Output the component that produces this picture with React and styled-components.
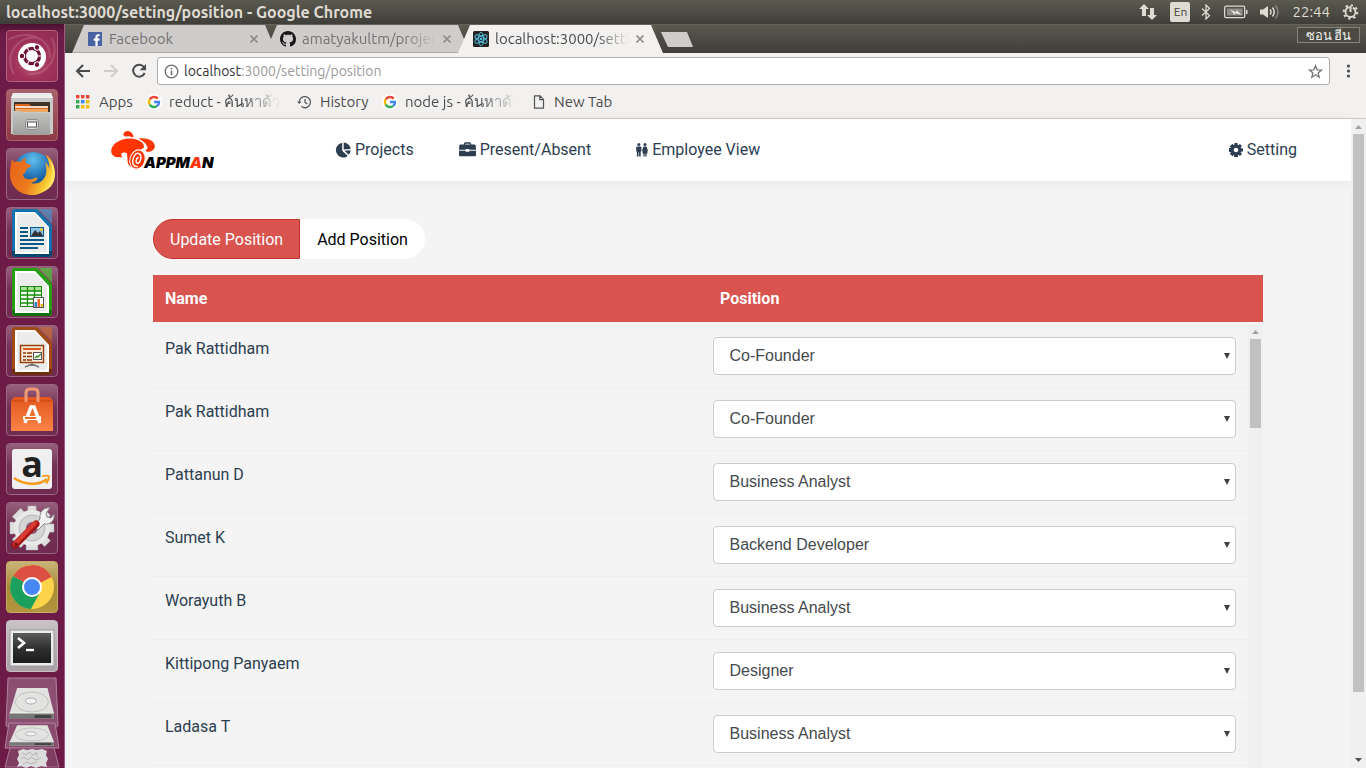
import React from "react";
import styled, { createGlobalStyle } from "styled-components";

const ui = `Ubuntu, "Open Sans", "Noto Sans", sans-serif`;

const GlobalStyle = createGlobalStyle`
  * { box-sizing: border-box; }
  body { margin: 0; font-family: ${ui}; }
  button, input, select { font: inherit; color: inherit; }
`;

/* ---------- desktop ---------- */

const Desktop = styled.div`
  display: flex;
  flex-direction: column;
  height: 100vh;
  overflow: hidden;
  background: #6b1b47;
`;

const MenuBar = styled.header`
  display: flex;
  align-items: center;
  justify-content: space-between;
  flex: none;
  height: 24px;
  padding: 0 7px 0 6px;
  background: linear-gradient(#5b5a50, #3f3e39);
  color: #dfdbd2;
`;

const WindowTitle = styled.h1`
  margin: 0;
  font-size: 16px;
  font-weight: 700;
  line-height: 24px;
  white-space: nowrap;
`;

const Indicators = styled.div`
  display: flex;
  align-items: center;
`;

const Indicator = styled.button`
  display: flex;
  padding: 0;
  margin-left: ${(p) => p.$gap || 12}px;
  border: 0;
  background: none;
  font-size: 15px;
  line-height: 20px;
`;

const Keyboard = styled(Indicator)`
  justify-content: center;
  width: 20px;
  border-radius: 2px;
  background: #dfdbd2;
  color: #45443e;
  font-size: 12px;
`;

const Body = styled.div`
  display: flex;
  flex: 1;
  min-height: 0;
`;

const Launcher = styled.nav`
  display: flex;
  flex-direction: column;
  align-items: center;
  gap: 7px;
  flex: none;
  width: 65px;
  padding-top: 6px;
  overflow: hidden;
  border-right: 1px solid #9c5c86;
  background: linear-gradient(#4b1130, #6d1c48 10px, #6b1b45);
`;

const Tile = styled.button`
  position: relative;
  flex: none;
  width: 52px;
  height: 52px;
  padding: 0;
  border: 1px solid ${(p) => p.$edge || "#9a6583"};
  border-radius: 4px;
  background: ${(p) => p.$bg || "linear-gradient(#96607c, #743153 45%, #6f2b50)"};

  svg { display: block; margin: -1px; }
`;

const Pip = styled.span`
  position: absolute;
  top: 20px;
  ${(p) => (p.$side === "left" ? "left: -7px" : "right: -6px")};
  border: 5px solid transparent;
  border-left-color: ${(p) => (p.$side === "left" ? "#dcd5d8" : "transparent")};
  border-right-color: ${(p) => (p.$side === "right" ? "#dcd5d8" : "transparent")};
  border-${(p) => p.$side}-width: 0;
`;

const Drives = styled.div`
  flex: none;
  margin-top: -2px;
  svg { display: block; }
`;

/* ---------- browser ---------- */

const Browser = styled.main`
  display: flex;
  flex-direction: column;
  flex: 1;
  min-width: 0;
  background: #f2f1f0;
`;

const TabStrip = styled.div`
  display: flex;
  flex: none;
  height: 29px;
  padding: 0 6px 0 7px;
  border-top: 1px solid #66645a;
  background: linear-gradient(#5a584f, #3f3e39);
`;

const TabShape = styled.div`
  position: relative;
  z-index: ${(p) => (p.$active ? 2 : 1)};
  display: flex;
  align-items: center;
  gap: 6px;
  width: 205px;
  margin-right: -12px;
  padding: 0 18px 0 15px;
  clip-path: polygon(12px 0, calc(100% - 12px) 0, 100% 100%, 0 100%);
  background: ${(p) => (p.$active ? "#f2f1f0" : "linear-gradient(#cfcdcc, #cfcdcc 27px, #aeacaa 27px)")};
  color: ${(p) => (p.$active ? "#4c4c4c" : "#737271")};
`;

const TabLabel = styled.span`
  flex: 1;
  overflow: hidden;
  font-size: 15px;
  line-height: 24px;
  white-space: nowrap;
  ${(p) => p.$fade && "mask-image: linear-gradient(90deg, #000 calc(100% - 32px), transparent);"}
`;

const IconButton = styled.button`
  display: flex;
  padding: 0;
  border: 0;
  background: none;
`;

const NewTab = styled.button`
  width: 32px;
  height: 15px;
  margin: 7px 0 0 10px;
  padding: 0;
  border: 0;
  clip-path: polygon(0 0, 26px 0, 100% 100%, 7px 100%);
  background: #cfcdcc;
`;

const UserBadge = styled.button`
  width: 63px;
  height: 16px;
  margin: 2px 0 0 auto;
  padding: 0;
  border: 1px solid #85837a;
  background: #4a4942;
  color: #eeeeec;
  font-size: 13px;
  line-height: 14px;
`;

const Toolbar = styled.div`
  display: flex;
  align-items: center;
  gap: 12px;
  flex: none;
  height: 36px;
  padding: 0 10px;
`;

const Address = styled.div`
  display: flex;
  align-items: center;
  flex: 1;
  height: 28px;
  margin-left: -2px;
  padding: 0 6px;
  gap: 5px;
  border: 1px solid #b0aeac;
  border-radius: 3px;
  background: #fff;
`;

const AddressField = styled.div`
  flex: 1;
  font-size: 14px;
  line-height: 20px;
  color: #9b9b9b;
  outline: none;
  b { font-weight: 400; color: #333; }
`;

const Bookmarks = styled.div`
  display: flex;
  align-items: center;
  flex: none;
  height: 30px;
  padding: 0 11px 4px;
  border-bottom: 1px solid #cccbca;
`;

const Bookmark = styled.a`
  display: flex;
  align-items: center;
  gap: ${(p) => (p.$fade ? 7 : 9)}px;
  width: ${(p) => p.$width}px;
  color: #4c4c4c;
  font-size: 15px;
  line-height: 24px;
  text-decoration: none;
  white-space: nowrap;
  svg { flex: none; }
`;

const BookmarkLabel = styled.span`
  overflow: hidden;
  ${(p) => p.$fade && "width: 112px; mask-image: linear-gradient(90deg, #000 calc(100% - 40px), transparent);"}
`;

/* ---------- page ---------- */

const Viewport = styled.div`
  display: flex;
  flex: 1;
  min-height: 0;
  color: #2c3e50;
  font-family: Roboto, sans-serif;
  font-size: 16px;
  line-height: 24px;
`;

const Page = styled.div`
  display: flex;
  flex-direction: column;
  flex: 1;
  min-width: 0;
  background: #f4f4f4;
`;

const SiteHeader = styled.header`
  display: flex;
  align-items: center;
  flex: none;
  height: 62px;
  padding: 0 54px 0 44px;
  background: #fff;
  box-shadow: 0 2px 12px rgba(0, 0, 0, 0.06);
`;

const LogoLink = styled.a`
  display: flex;
  margin-right: 121px;
`;

const SiteNav = styled.nav`
  display: flex;
  flex: 1;
  gap: 45px;
`;

const NavLink = styled.a`
  display: flex;
  align-items: center;
  gap: 4px;
  color: #2c3e50;
  text-decoration: none;
  &:last-child { margin-left: auto; }
`;

const Content = styled.section`
  display: flex;
  flex-direction: column;
  flex: 1;
  min-height: 0;
  padding: 38px 88px 0;
`;

const Pills = styled.div`
  display: flex;
  flex: none;
  margin-bottom: 16px;
`;

const Pill = styled.button`
  height: 40px;
  padding: 1px 16px 0;
  border: 1px solid ${(p) => (p.$active ? "#c9302c" : "#fff")};
  border-radius: ${(p) => (p.$active ? "20px 0 0 20px" : "0 20px 20px 0")};
  background: ${(p) => (p.$active ? "#d9534f" : "#fff")};
  color: ${(p) => (p.$active ? "#fff" : "#000")};
`;

const Table = styled.table`
  width: 100%;
  table-layout: fixed;
  border-collapse: collapse;
`;

const HeadCell = styled.th`
  height: 47px;
  padding: 0 12px;
  background: #d9534f;
  color: #fff;
  font-weight: 700;
  text-align: left;
`;

const Scroller = styled.div`
  display: flex;
  flex: 1;
  min-height: 0;
  overflow: hidden;
  margin-top: 2px;
`;

const Rows = styled.div`
  flex: 1;
  overflow: hidden;
`;

const Cell = styled.td`
  height: 63px;
  padding: 12px;
  border-top: 1px solid #eceeef;
  vertical-align: top;
`;

const SelectBox = styled.div`
  position: relative;
  svg {
    position: absolute;
    right: 6px;
    top: 16px;
    pointer-events: none;
  }
`;

const Select = styled.select`
  display: block;
  width: 100%;
  height: 38px;
  padding: 0 24px 0 16px;
  appearance: none;
  border: 1px solid #ccc;
  border-radius: 4px;
  background: #fff;
  color: #464a4c;
  font-family: "Liberation Sans", Arial, sans-serif;
`;

const ScrollTrack = styled.div`
  display: flex;
  flex-direction: column;
  align-items: center;
  flex: none;
  width: 15px;
  background: #f0f0f0;
  svg { flex: none; }
  svg:last-child { margin-top: auto; }
`;

const ScrollThumb = styled.div`
  flex: none;
  width: 11px;
  height: ${(p) => p.$size};
  background: #c1c1c1;
`;

/* ---------- drawings ---------- */

const Arrow = ({ up, color }) => (
  <svg width="15" height="15" viewBox="0 0 15 15">
    <path d={up ? "M4 10l3.5-4 3.5 4z" : "M4 5l3.5 4 3.5-4z"} fill={color} />
  </svg>
);

const Google = () => (
  <svg width="16" height="16" viewBox="0 0 16 16">
    <circle cx="8" cy="8" r="8" fill="#fff" />
    <g fill="none" strokeWidth="2.4">
      <path d="M11.7 4.6A5 5 0 0 0 3.7 5.4" stroke="#ea4335" />
      <path d="M3.7 5.4A5 5 0 0 0 3.7 10.6" stroke="#fbbc05" />
      <path d="M3.7 10.6A5 5 0 0 0 11.2 11.9" stroke="#34a853" />
      <path d="M11.2 11.9A5 5 0 0 0 13 8H8" stroke="#4285f4" />
    </g>
  </svg>
);

const AppsGrid = () => (
  <svg width="14" height="14" viewBox="0 0 14 14">
    {["#ea4335", "#ea4335", "#ea4335", "#34a853", "#4285f4", "#fbbc05", "#34a853", "#fbbc05", "#fbbc05"].map((c, i) => (
      <rect key={i} x={(i % 3) * 5} y={Math.floor(i / 3) * 5} width="3.4" height="3.4" fill={c} />
    ))}
  </svg>
);

const HistoryIcon = () => (
  <svg width="14" height="14" viewBox="0 0 14 14" fill="none" stroke="#5a5a5a" strokeWidth="1.3">
    <path d="M2.2 7.2A5.6 5.6 0 1 1 4.4 11.6M8 4v3.4l2.4 1.6" />
    <path d="M0 6.4h4.6L2.3 9z" fill="#5a5a5a" stroke="none" />
  </svg>
);

const PageIcon = () => (
  <svg width="12" height="14" viewBox="0 0 12 14" fill="none" stroke="#555" strokeWidth="1.2">
    <path d="M1.5.8h5.6l3.4 3.6v8.8h-9zM6.8.8v3.9h3.7" />
  </svg>
);

const CloseIcon = () => (
  <svg width="10" height="10" viewBox="0 0 10 10">
    <path d="M1.5 1.5l7 7M8.5 1.5l-7 7" stroke="#8a8988" strokeWidth="1.6" />
  </svg>
);

const FacebookIcon = () => (
  <svg width="16" height="16" viewBox="0 0 16 16">
    <rect x="1" y="1" width="14" height="14" fill="#4862a3" />
    <path d="M8.4 15V9.7H6.7V7.6h1.7V6c0-1.8 1-2.8 2.7-2.8h1.6v2h-1c-.9 0-1.1.4-1.1 1.1v1.3h2.1l-.3 2.1h-1.8V15z" fill="#fff" />
  </svg>
);

const GithubIcon = () => (
  <svg width="16" height="16" viewBox="0 0 16 16">
    <path
      fill="#191717"
      d="M8 0C3.58 0 0 3.58 0 8c0 3.54 2.29 6.53 5.47 7.59.4.07.55-.17.55-.38 0-.19-.01-.82-.01-1.49-2.01.37-2.53-.49-2.69-.94-.09-.23-.48-.94-.82-1.13-.28-.15-.68-.52-.01-.53.63-.01 1.08.58 1.23.82.72 1.21 1.87.87 2.33.66.07-.52.28-.87.51-1.07-1.78-.2-3.64-.89-3.64-3.95 0-.87.31-1.59.82-2.15-.08-.2-.36-1.02.08-2.12 0 0 .67-.21 2.2.82.64-.18 1.32-.27 2-.27s1.36.09 2 .27c1.53-1.04 2.2-.82 2.2-.82.44 1.1.16 1.92.08 2.12.51.56.82 1.27.82 2.15 0 3.07-1.87 3.75-3.65 3.95.29.25.54.73.54 1.48 0 1.07-.01 1.93-.01 2.2 0 .21.15.46.55.38A8.01 8.01 0 0 0 16 8c0-4.42-3.58-8-8-8z"
    />
  </svg>
);

const ReactIcon = () => (
  <svg width="16" height="16" viewBox="0 0 16 16">
    <rect width="16" height="16" rx="1.5" fill="#222" />
    <g fill="none" stroke="#53c1de" strokeWidth=".9">
      {[30, 90, 150].map((a) => (
        <ellipse key={a} cx="8" cy="8" rx="6.8" ry="2.6" transform={`rotate(${a} 8 8)`} />
      ))}
    </g>
    <circle cx="8" cy="8" r="1.3" fill="#53c1de" />
  </svg>
);

const Logo = () => (
  <svg width="105" height="42" viewBox="0 0 105 42" role="img" aria-label="Appman">
    <path fill="#fe3502" d="M14.300 6C14.500 3.200 17 1.600 20 2.200c2.600.500 4 2.800 4.600 5.400l-1 .8c-2.600-1.200-5-1.300-7.300-.6z" />
    <path
      fill="#fe3502"
      d="M2.200 22C2.200 15 11 9.400 20.500 9.400c5 0 9.500 1.200 12.500 4 1.300 1.200 2 3 2.100 5.200L31 21l-4 18.500c-5-.5-8-3-8.400-7L18 24.200c-2.500-1.300-5.200-.6-6 1l1.400 3c-3 .4-6.700 0-8.700-1.300-1.800-1-2.500-2.800-2.500-4.900z"
    />
    <path fill="#fe3502" d="M29.500 9.600c8.500-1.200 16.300 2.200 16.300 7.600 0 3.400-3.600 6-7.600 5.600l-1.800-.8 2.200-3c-.5-3.800-4.500-7-9.100-9.400z" />
    <ellipse cx="28.500" cy="30.500" rx="7.500" ry="9.800" fill="#fe3502" stroke="#fff" transform="rotate(18 28.500 30.500)" />
    <g fill="none" stroke="#fff" strokeWidth="1.500">
      <path d="M29 37.500c-3.800.6-5.600-1.900-5.200-5.900.5-4.600 2.900-7.600 5.600-7.200 2.500.4 3 3.200 2.200 6.200-.6 2.200-1.700 3.700-3 3.700-1.300 0-1.700-1.500-1.300-3.200.4-1.600 1.200-2.700 2.400-2.700" />
    </g>
    <text x="35" y="39" fontFamily="Inter, sans-serif" fontSize="15" fontWeight="900" fontStyle="italic" fill="#000">
      APPM<tspan fill="#fe3502">A</tspan>N
    </text>
  </svg>
);

const PieIcon = () => (
  <svg width="16" height="16" viewBox="0 0 16 16" fill="#2c3e50">
    <path d="M7.200.8v7.900l5.600 5.300A7.400 7.400 0 1 1 7.200.8z" />
    <path d="M8.700.5a7.300 7.300 0 0 1 6.900 6.500L8.700 7.500z" />
    <path d="M9.600 8.700l6-.4a7.300 7.300 0 0 1-1.900 4.500z" />
  </svg>
);

const BriefcaseIcon = () => (
  <svg width="17" height="16" viewBox="0 0 17 16">
    <path d="M5.500 3.600V1.900q0-.9.900-.9h4.200q.9 0 .9.900v1.700" fill="none" stroke="#2c3e50" strokeWidth="1.300" />
    <path d="M1.500 2.500h14q1 0 1.200 1l.3 4.200h-6.700V7H6.700v.7H0L.3 3.500q.2-1 1.200-1z" fill="#2c3e50" />
    <path d="M0 8.700h6.700v1.100h3.600V8.700H17v4.600q0 1-1 1H1q-1 0-1-1z" fill="#2c3e50" />
  </svg>
);

const PeopleIcon = () => (
  <svg width="12" height="16" viewBox="0 0 12 16" fill="#2c3e50">
    <circle cx="2.800" cy="2.500" r="1.500" />
    <path d="M1.200 4.500h3.200q1 0 1 1V9.400H4.700V14.600H3.100V10.500H2.500v4.100H.9V9.400H.2V5.500q0-1 1-1z" />
    <circle cx="9" cy="2.500" r="1.500" />
    <path d="M8 4.500h2q.7 0 .9.700L12 9.300l-.8.300.4 2h-1v3H9.300v-3h-.6v3H7.400v-3h-1l.4-2-.8-.3 1.100-4.100q.2-.7.900-.7z" />
  </svg>
);

const GearIcon = () => (
  <svg width="14" height="16" viewBox="0 0 14 16">
    <g fill="#2c3e50">
      {[0, 45, 90, 135].map((a) => (
        <path key={a} d="M5.500 1h3l.5 14H5z" transform={`rotate(${a} 7 8)`} />
      ))}
      <circle cx="7" cy="8" r="5.400" />
    </g>
    <circle cx="7" cy="8" r="2.300" fill="#fff" />
  </svg>
);

/* launcher drawings, each on a 52px tile */

const Art = ({ children }) => (
  <svg width="52" height="52" viewBox="0 0 52 52">{children}</svg>
);

const UbuntuArt = () => (
  <Art>
    <g fill="none" stroke="#fff" strokeWidth="2" opacity=".14">
      <path d="M2 10C20 0 44 6 44 28M46 8C54 26 42 46 22 44M8 44C-2 26 10 6 30 8" />
    </g>
    <circle cx="26" cy="27" r="14" fill="#fff" />
    <circle cx="26" cy="26" r="7.600" fill="none" stroke="#6d1339" strokeWidth="3.200" />
    {[60, 180, 300].map((a) => (
      <g key={a} transform={`rotate(${a} 26 26)`}>
        <path d="M26 26h12" stroke="#fff" strokeWidth="1" transform="rotate(60 26 26)" />
        <circle cx="36" cy="26" r="3.200" fill="#fff" />
        <circle cx="36" cy="26" r="2.200" fill="#6d1339" />
      </g>
    ))}
  </Art>
);

const FilesArt = () => (
  <Art>
    <path d="M7 4h38l2 5v36H5V9z" fill="#c9c9c8" />
    <path d="M7 4h38l2 5H5z" fill="#eee" />
    <rect x="8" y="13" width="36" height="10" fill="#3f3328" />
    <path d="M9 15h14l2 2h17v6H9z" fill="#d96a1e" />
    <path d="M9 18h33" stroke="#fff" strokeWidth="1.500" />
    <path d="M9 20h33v3H9z" fill="#f0a565" />
    <path d="M7 22h8l2 2h27v22H7z" fill="url(#cabinet)" />
    <rect x="19.500" y="30.500" width="13" height="10" rx="2.500" fill="#d7d7d6" stroke="#8d8d8d" />
    <rect x="21.500" y="33" width="9" height="5" fill="#fff" stroke="#555" />
    <defs>
      <linearGradient id="cabinet" x2="0" y2="1">
        <stop stopColor="#c3c3c2" />
        <stop offset="1" stopColor="#9e9e9d" />
      </linearGradient>
    </defs>
  </Art>
);

const FirefoxArt = () => (
  <Art>
    <defs>
      <radialGradient id="globe" cx=".5" cy=".2" r=".8">
        <stop stopColor="#60c0ee" />
        <stop offset=".6" stopColor="#1a66ab" />
        <stop offset="1" stopColor="#12315f" />
      </radialGradient>
      <linearGradient id="fox" x1="0" x2="1" y2=".4">
        <stop stopColor="#e8611b" />
        <stop offset=".6" stopColor="#ec7a1c" />
        <stop offset="1" stopColor="#fbd63a" />
      </linearGradient>
    </defs>
    <circle cx="27" cy="24" r="20" fill="url(#globe)" />
    <path
      fill="url(#fox)"
      d="M6 11c1 2 2 3 3 3 2-1 4-1 6 0 1-2 3-4 5-4-1 2-1 4 0 5 2 2 5 1 5 3 0 1-4 2-5 4 0 3-2 3-3 5 1 4 5 5 9 4 3-1 4-2 5-1 1 2-3 4-6 5 7 2 13-2 15-9 1-5 0-9-1-12 3 2 4 5 4 7 1-5-1-11-4-15 7 4 10 12 9 20-1 13-11 21-22 21C13 47 4 38 4 26c0-6 1-11 2-15z"
    />
    <path d="M43 12c3 5 4 10 3 15 0 8-5 14-12 17 9-1 15-8 15-18 0-6-2-11-6-14z" fill="#fde366" />
  </Art>
);

const OfficeArt = ({ color, dark, light, children }) => (
  <Art>
    <path d="M9 2h22l15 16v28q0 4-4 4H10q-4 0-4-4V5q0-3 3-3z" fill={color} />
    <path d="M6 44h40v2q0 4-4 4H10q-4 0-4-4z" fill={dark} />
    <path d="M33 2h11q2 0 2 2v13z" fill={light} opacity=".6" />
    <path d="M9 5h20l14 15v27H9z" fill="#fff" />
    <path d="M11 7h18l12 13v25H11z" fill="#ececec" />
    {children}
  </Art>
);

const WriterArt = () => (
  <OfficeArt color="#1371ab" dark="#06476f" light="#3d9ad6">
    <path d="M14 21h8M14 25h8M14 29h8M14 33h24M14 37h24M14 41h18" stroke="#0b5787" strokeWidth="2" />
    <rect x="24.500" y="20.500" width="13" height="9" fill="#8cc4e8" stroke="#0b5787" />
    <path d="M25 29l4-6 3 3 2-2 3 5z" fill="#333" />
    <circle cx="35.500" cy="22.500" r="1.500" fill="#f6c52c" />
  </OfficeArt>
);

const CalcArt = () => (
  <OfficeArt color="#24a012" dark="#11720a" light="#43d42c">
    <rect x="14.500" y="20.500" width="21" height="20" fill="#f3fff0" stroke="#1b8a0c" />
    <rect x="15" y="21" width="20" height="4" fill="#a5e398" />
    <path d="M14 25h22M14 29h22M14 33h22M14 37h22M21.500 20v21M28.500 20v21" stroke="#1b8a0c" strokeWidth="1.300" />
    <rect x="27.500" y="31.500" width="10" height="10" fill="#fff" stroke="#555" />
    <path d="M28.500 36h2.500v5h-2.500z" fill="#2a81c4" />
    <path d="M31.500 33h2.500v8h-2.500z" fill="#e66a1f" />
    <path d="M34.500 38H37v3h-2.500z" fill="#f3b72a" />
  </OfficeArt>
);

const ImpressArt = () => (
  <OfficeArt color="#a14a14" dark="#6d2f07" light="#d2702a">
    <rect x="14.500" y="20.500" width="23" height="17" fill="#fdeadd" stroke="#97410f" strokeWidth="1.500" />
    <path d="M17 24h18" stroke="#d65c1a" strokeWidth="2" />
    <path d="M17 28h3M17 31.500h3M17 35h3M21 28h5M21 31.500h5M21 35h5" stroke="#843a0c" strokeWidth="1.600" />
    <rect x="27.500" y="27.500" width="8" height="7" fill="#fff" stroke="#555" />
    <path d="M29 33l2-2 1 1 3-3" fill="none" stroke="#3a8f22" strokeWidth="1.400" />
    <path d="M26 38v3M19 42l7-3 7 3" fill="none" stroke="#777" strokeWidth="1.600" />
  </OfficeArt>
);

const SoftwareArt = () => (
  <Art>
    <defs>
      <linearGradient id="bag" x2="0" y2="1">
        <stop stopColor="#e2571d" />
        <stop offset="1" stopColor="#fa8445" />
      </linearGradient>
    </defs>
    <path d="M8 13h36l3 4v30H5V17z" fill="url(#bag)" />
    <path d="M5 17h42" stroke="#c24510" />
    <path d="M20 18V9q0-4 4-4h4q4 0 4 4v9" fill="none" stroke="#ef9a72" strokeWidth="3" />
    <path d="M19 39l6-16h3l6 16" fill="none" stroke="#fff" strokeWidth="3.500" />
    <rect x="17" y="32" width="18" height="4" rx="1" fill="#fff" />
    <rect x="19" y="33" width="11" height="2" fill="#ee6a28" />
  </Art>
);

const AmazonArt = () => (
  <Art>
    <rect x="6" y="6" width="40" height="40" rx="3" fill="#f0f0f0" />
    <text x="26" y="34" textAnchor="middle" fontFamily="Open Sans, sans-serif" fontSize="36" fontWeight="700" fill="#222">a</text>
    <path d="M8 35c10 7 25 8 33 1" fill="none" stroke="#f79a1b" strokeWidth="2.400" />
    <path d="M36 33.500c3-1 6-1 7 0 0 2-1 5-3 7" fill="none" stroke="#f79a1b" strokeWidth="1.800" />
  </Art>
);

const SettingsArt = () => (
  <Art>
    <g fill="#dedede" stroke="#b5b5b5" strokeWidth=".5">
      {[0, 45, 90, 135].map((a) => (
        <path key={a} d="M22 4h8l2 44H20z" transform={`rotate(${a} 26 26)`} />
      ))}
    </g>
    <circle cx="26" cy="26" r="18" fill="#e8e8e8" />
    <circle cx="26" cy="26" r="13" fill="#d4d4d4" stroke="#b5b5b5" />
    <circle cx="26" cy="26" r="6" fill="#8d5570" />
    <path d="M28 23l6-6c-1-7 4-12 10-11l-4 5 1 4 4 1 3-4c1 6-3 11-10 10l-6 6z" fill="#f1f1f1" stroke="#888" />
    <path d="M9 43L30 22" stroke="#a31414" strokeWidth="7" strokeLinecap="round" />
    <path d="M9 42L29 21" stroke="#d93a34" strokeWidth="4" strokeLinecap="round" />
    <circle cx="10" cy="42" r="1.600" fill="#6b0f0f" />
  </Art>
);

const ChromeArt = () => (
  <Art>
    <circle cx="26" cy="26" r="22" fill="#fdd34a" />
    <path d="M26 26L7 15a22 22 0 0 1 38.500 1z" fill="#dd4f43" />
    <path d="M26 4a22 22 0 0 1 19.500 12H26z" fill="#dd4f43" />
    <path d="M7 15a22 22 0 0 0 18 33l9-17-8-5z" fill="#1a9f5c" />
    <circle cx="26" cy="26" r="10" fill="#fff" />
    <circle cx="26" cy="26" r="8" fill="#4788f4" />
  </Art>
);

const TerminalArt = () => (
  <Art>
    <defs>
      <linearGradient id="screen" x2="0" y2="1">
        <stop stopColor="#5c5c5c" />
        <stop offset=".5" stopColor="#303030" />
        <stop offset="1" stopColor="#1c1c1c" />
      </linearGradient>
    </defs>
    <rect x="4" y="10" width="44" height="36" rx="1" fill="#ececec" stroke="#999" />
    <rect x="7" y="13" width="38" height="30" fill="url(#screen)" />
    <path d="M12 18l6 5-6 5" fill="none" stroke="#fff" strokeWidth="2.600" />
    <path d="M20 30h8" stroke="#fff" strokeWidth="2.400" />
  </Art>
);

const Disk = () => (
  <g>
    <path d="M11 11h33l7 25v6H3v-6z" fill="#e2e2e1" />
    <path d="M3 36h48v6H3z" fill="#777" />
    <path d="M3 36h48" stroke="#f5f5f5" />
    <path d="M30 38h18v3H30z" fill="#444" />
    <ellipse cx="27" cy="25" rx="18" ry="10" fill="none" stroke="#bdbdbd" />
    <ellipse cx="26" cy="24" rx="6" ry="3" fill="#f5f5f5" stroke="#aaa" />
  </g>
);

const DrivesArt = () => (
  <svg width="56" height="94" viewBox="0 0 56 94">
    <path d="M4 1h48l2 47q0 2-2 2H4q-2 0-2-2z" fill="#8d4f71" stroke="#b083a0" />
    <g transform="translate(3 0) scale(.92 1)"><Disk /></g>
    <path d="M5 46h46l4 25H1z" fill="#8a4b6e" stroke="#b083a0" />
    <g transform="translate(3 41) scale(.92 .66)"><Disk /></g>
    <path d="M6 71h44l5 19H1z" fill="#7f3d62" stroke="#a87795" />
    <path
      d="M14 74l5-2 4 1 5-1 5 1 5-1 5 2-1 4 2 4-2 4 1 4-6-1-5 2-5-2-5 2-5-2-4 1 2-4-2-4 2-4z"
      fill="#dcdcdc"
    />
    <path d="M18 76l4 2 3-3 4 3 5-2M17 82l3-2 4 3 3-3 5 3 5-2M19 87l4-2 4 2 6-2M31 75l3 5" fill="none" stroke="#b4b4b4" />
  </svg>
);

/* ---------- data ---------- */

const tiles = [
  { label: "Search", art: <UbuntuArt />, bg: "radial-gradient(circle at 50% 60%, #c0617f, #a2335a 45%, #8e2a50)", edge: "#b4617f" },
  { label: "Files", art: <FilesArt />, bg: "linear-gradient(#a8626c, #8d3b45)", edge: "#a9616d", left: true },
  { label: "Firefox", art: <FirefoxArt /> },
  { label: "Writer", art: <WriterArt /> },
  { label: "Calc", art: <CalcArt /> },
  { label: "Impress", art: <ImpressArt /> },
  { label: "Software", art: <SoftwareArt /> },
  { label: "Amazon", art: <AmazonArt /> },
  { label: "System Settings", art: <SettingsArt /> },
  { label: "Google Chrome", art: <ChromeArt />, bg: "linear-gradient(#c9b47a, #a98a35 50%, #b3953f)", edge: "#c4ab66", left: true, right: true },
  { label: "Terminal", art: <TerminalArt />, bg: "linear-gradient(#c9c2c6, #a99fa5)", edge: "#c9bfc5", left: true },
];

const tabs = [
  { label: "Facebook", icon: <FacebookIcon /> },
  { label: "amatyakultm/project", icon: <GithubIcon />, fade: true },
  { label: "localhost:3000/setting", icon: <ReactIcon />, fade: true, active: true },
];

const bookmarks = [
  { label: "Apps", icon: <AppsGrid />, width: 70 },
  { label: "reduct - ค้นหาด้วย", icon: <Google />, width: 151, fade: true },
  { label: "History", icon: <HistoryIcon />, width: 85 },
  { label: "node js - ค้นหาด้วย", icon: <Google />, width: 151, fade: true },
  { label: "New Tab", icon: <PageIcon />, width: 90 },
];

const positions = ["Co-Founder", "Business Analyst", "Backend Developer", "Designer"];

const people = [
  ["Pak Rattidham", "Co-Founder"],
  ["Pak Rattidham", "Co-Founder"],
  ["Pattanun D", "Business Analyst"],
  ["Sumet K", "Backend Developer"],
  ["Worayuth B", "Business Analyst"],
  ["Kittipong Panyaem", "Designer"],
  ["Ladasa T", "Business Analyst"],
];

export default function App() {
  return (
    <Desktop>
      <GlobalStyle />
      <MenuBar>
        <WindowTitle>localhost:3000/setting/position - Google Chrome</WindowTitle>
        <Indicators>
          <Indicator aria-label="Network">
            <svg width="18" height="16" viewBox="0 0 18 16" fill="#dfdbd2">
              <path d="M5 0l5 5H7v7H3V5H0zM13 16l-5-5h3V4h4v7h3z" />
            </svg>
          </Indicator>
          <Keyboard aria-label="Keyboard" $gap={13}>En</Keyboard>
          <Indicator aria-label="Bluetooth" $gap={11}>
            <svg width="10" height="16" viewBox="0 0 10 16" fill="none" stroke="#dfdbd2" strokeWidth="1.300">
              <path d="M1 4.500l7.500 7L5 15V1l3.500 3.500L1 11.500" />
            </svg>
          </Indicator>
          <Indicator aria-label="Battery" $gap={13}>
            <svg width="24" height="14" viewBox="0 0 24 14">
              <rect x=".7" y="1.200" width="20" height="11.500" rx="1.500" fill="none" stroke="#dfdbd2" strokeWidth="1.300" />
              <rect x="3" y="3.500" width="15.500" height="7" fill="#8f8d85" />
              <path d="M22 5v4h1.500V5z" fill="#dfdbd2" />
              <path d="M6 4.500l6 3 .5-2.500 5 5-6-2-.5 2z" fill="#efece6" />
            </svg>
          </Indicator>
          <Indicator aria-label="Sound" $gap={12}>
            <svg width="20" height="16" viewBox="0 0 20 16" fill="none" stroke="#dfdbd2" strokeWidth="1.500">
              <path d="M0 5.500h3L8 2v12l-5-3.500H0z" fill="#dfdbd2" stroke="none" />
              <path d="M10 5.500q2 2.500 0 5M12.500 3.500q3.500 4.500 0 9" />
              <path d="M15.500 1.500q5 6.500 0 13" opacity=".4" />
            </svg>
          </Indicator>
          <Indicator>22:44</Indicator>
          <Indicator aria-label="Session">
            <svg width="17" height="16" viewBox="0 0 17 16" fill="none" stroke="#dfdbd2">
              <circle cx="8.500" cy="8" r="5" strokeWidth="1.800" strokeDasharray="27 5" strokeDashoffset="-2.500" transform="rotate(-90 8.500 8)" />
              <circle cx="8.500" cy="8" r="6.800" strokeWidth="2" strokeDasharray="2.300 3.040" />
              <path d="M8.500 2v6" strokeWidth="2" />
            </svg>
          </Indicator>
        </Indicators>
      </MenuBar>

      <Body>
        <Launcher aria-label="Launcher">
          {tiles.map((t) => (
            <Tile key={t.label} aria-label={t.label} $bg={t.bg} $edge={t.edge}>
              {t.art}
              {t.left && <Pip $side="left" />}
              {t.right && <Pip $side="right" />}
            </Tile>
          ))}
          <Drives><DrivesArt /></Drives>
        </Launcher>

        <Browser>
          <TabStrip>
            {tabs.map((t) => (
              <TabShape key={t.label} $active={t.active}>
                {t.icon}
                <TabLabel $fade={t.fade}>{t.label}</TabLabel>
                <IconButton aria-label={`Close ${t.label}`}><CloseIcon /></IconButton>
              </TabShape>
            ))}
            <NewTab aria-label="New tab" />
            <UserBadge>ซอน ฮีน</UserBadge>
          </TabStrip>

          <Toolbar>
            <IconButton aria-label="Back">
              <svg width="16" height="16" viewBox="0 0 16 16" fill="none" stroke="#4a4a4a" strokeWidth="2">
                <path d="M15 8H2.500M8 2L2 8l6 6" />
              </svg>
            </IconButton>
            <IconButton aria-label="Forward">
              <svg width="16" height="16" viewBox="0 0 16 16" fill="none" stroke="#cfcecd" strokeWidth="2">
                <path d="M1 8h12.500M8 2l6 6-6 6" />
              </svg>
            </IconButton>
            <IconButton aria-label="Reload">
              <svg width="16" height="16" viewBox="0 0 16 16">
                <path d="M12.900 4A6 6 0 1 0 13.700 10" fill="none" stroke="#4a4a4a" strokeWidth="2" />
                <path d="M15 1v6.300H8.700z" fill="#4a4a4a" />
              </svg>
            </IconButton>
            <Address>
              <svg width="15" height="15" viewBox="0 0 15 15" fill="none" stroke="#6b6b6b" strokeWidth="1.300">
                <circle cx="7.500" cy="7.500" r="6.300" />
                <path d="M7.500 6.700V11M7.500 4v1.500" strokeWidth="1.600" />
              </svg>
              <AddressField role="textbox" aria-label="Address" contentEditable suppressContentEditableWarning>
                <b>localhost</b>:3000/setting/position
              </AddressField>
              <IconButton aria-label="Bookmark this page">
                <svg width="15" height="15" viewBox="0 0 15 15" fill="none" stroke="#777" strokeWidth="1.300">
                  <path d="M7.500 1.700l1.600 4.100 4.400.3-3.400 2.800 1.100 4.300-3.700-2.400-3.700 2.400 1.100-4.300L1.500 6.100l4.400-.3z" />
                </svg>
              </IconButton>
            </Address>
            <IconButton aria-label="Menu">
              <svg width="14" height="16" viewBox="0 0 14 16" fill="#4a4a4a">
                <circle cx="6.500" cy="3" r="1.600" />
                <circle cx="6.500" cy="8" r="1.600" />
                <circle cx="6.500" cy="13" r="1.600" />
              </svg>
            </IconButton>
          </Toolbar>

          <Bookmarks>
            {bookmarks.map((b) => (
              <Bookmark key={b.label} href="#" $width={b.width} $fade={b.fade}>
                {b.icon}
                <BookmarkLabel $fade={b.fade}>{b.label}</BookmarkLabel>
              </Bookmark>
            ))}
          </Bookmarks>

          <Viewport>
            <Page>
              <SiteHeader>
                <LogoLink href="#" aria-label="Appman"><Logo /></LogoLink>
                <SiteNav>
                  <NavLink href="#"><PieIcon />Projects</NavLink>
                  <NavLink href="#"><BriefcaseIcon />Present/Absent</NavLink>
                  <NavLink href="#"><PeopleIcon />Employee View</NavLink>
                  <NavLink href="#"><GearIcon />Setting</NavLink>
                </SiteNav>
              </SiteHeader>

              <Content>
                <Pills>
                  <Pill $active>Update Position</Pill>
                  <Pill>Add Position</Pill>
                </Pills>
                <Table>
                  <thead>
                    <tr>
                      <HeadCell scope="col">Name</HeadCell>
                      <HeadCell scope="col">Position</HeadCell>
                    </tr>
                  </thead>
                </Table>
                <Scroller>
                  <Rows>
                    <Table aria-label="Positions">
                      <tbody>
                        {people.map(([name, position], i) => (
                          <tr key={i}>
                            <Cell>{name}</Cell>
                            <Cell>
                              <SelectBox>
                                <Select aria-label={`Position of ${name}`} defaultValue={position}>
                                  {positions.map((p) => <option key={p}>{p}</option>)}
                                </Select>
                                <svg width="6" height="6" viewBox="0 0 6 6"><path d="M0 0h6L3 6z" fill="#3c4043" /></svg>
                              </SelectBox>
                            </Cell>
                          </tr>
                        ))}
                        <tr>
                          <Cell />
                          <Cell />
                        </tr>
                      </tbody>
                    </Table>
                  </Rows>
                  <ScrollTrack>
                    <Arrow up color="#a3a3a3" />
                    <ScrollThumb $size="20%" />
                  </ScrollTrack>
                </Scroller>
              </Content>
            </Page>
            <ScrollTrack>
              <Arrow up color="#a3a3a3" />
              <ScrollThumb $size="86%" />
              <Arrow color="#505050" />
            </ScrollTrack>
          </Viewport>
        </Browser>
      </Body>
    </Desktop>
  );
}
